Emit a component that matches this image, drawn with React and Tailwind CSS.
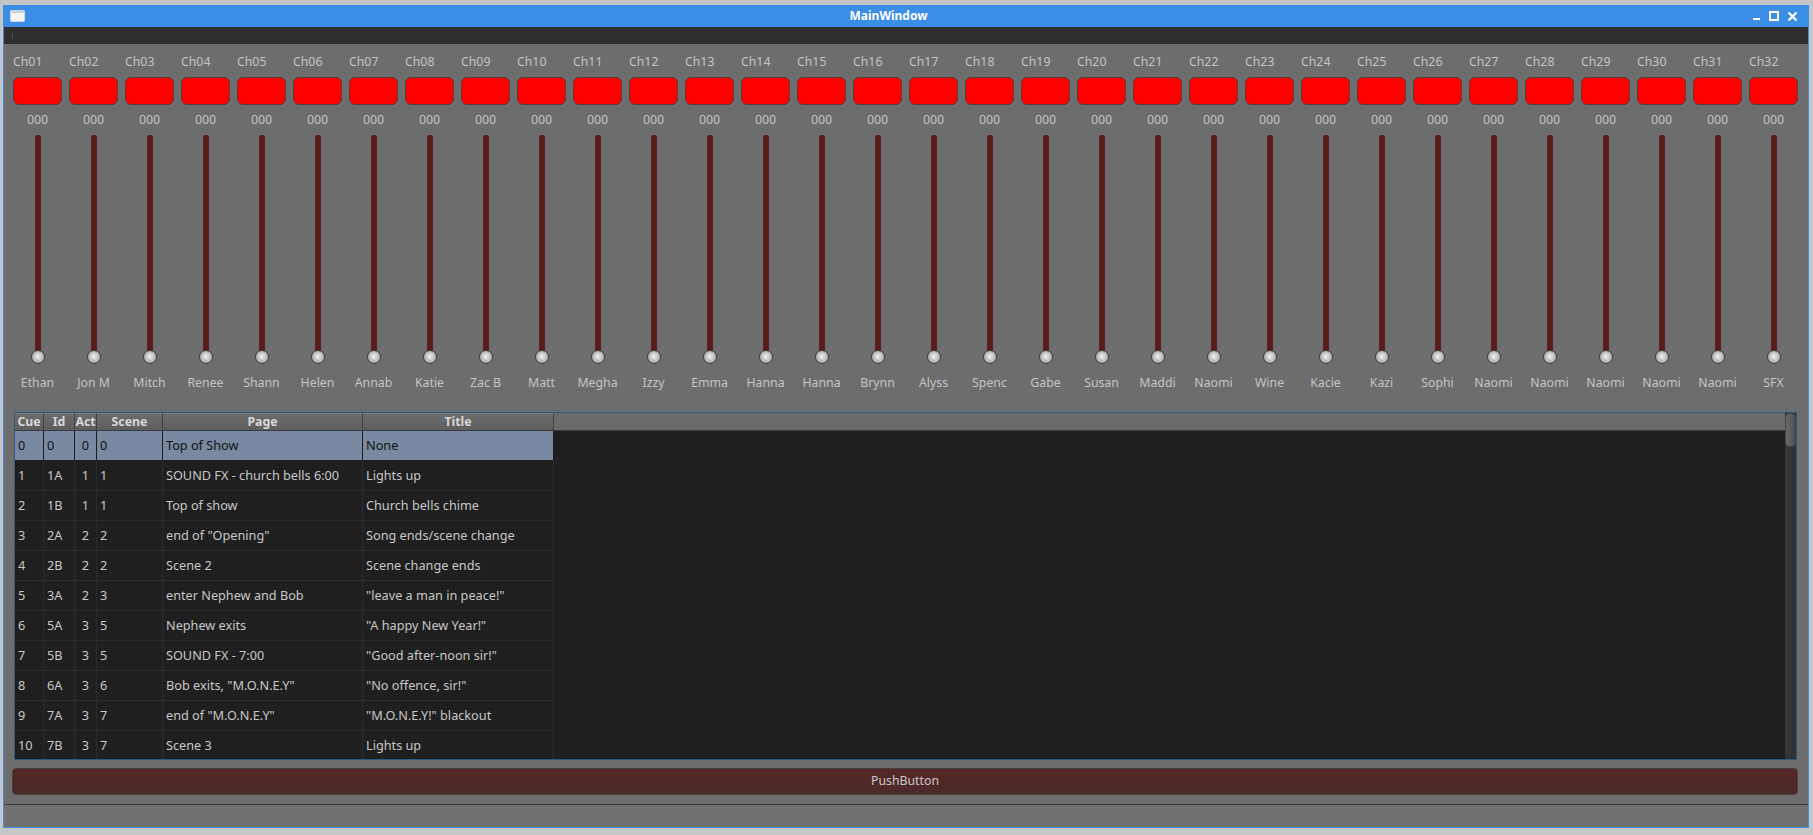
import React from 'react';

const names = [
  'Ethan', 'Jon M', 'Mitch', 'Renee', 'Shann', 'Helen', 'Annab', 'Katie',
  'Zac B', 'Matt', 'Megha', 'Izzy', 'Emma', 'Hanna', 'Hanna', 'Brynn',
  'Alyss', 'Spenc', 'Gabe', 'Susan', 'Maddi', 'Naomi', 'Wine', 'Kacie',
  'Kazi', 'Sophi', 'Naomi', 'Naomi', 'Naomi', 'Naomi', 'Naomi', 'SFX',
];

const cues = [
  ['0', '0', '0', '0', 'Top of Show', 'None'],
  ['1', '1A', '1', '1', 'SOUND FX - church bells 6:00', 'Lights up'],
  ['2', '1B', '1', '1', 'Top of show', 'Church bells chime'],
  ['3', '2A', '2', '2', 'end of "Opening"', 'Song ends/scene change'],
  ['4', '2B', '2', '2', 'Scene 2', 'Scene change ends'],
  ['5', '3A', '2', '3', 'enter Nephew and Bob', '"leave a man in peace!"'],
  ['6', '5A', '3', '5', 'Nephew exits', '"A happy New Year!"'],
  ['7', '5B', '3', '5', 'SOUND FX - 7:00', '"Good after-noon sir!"'],
  ['8', '6A', '3', '6', 'Bob exits, "M.O.N.E.Y"', '"No offence, sir!"'],
  ['9', '7A', '3', '7', 'end of "M.O.N.E.Y"', '"M.O.N.E.Y!" blackout'],
  ['10', '7B', '3', '7', 'Scene 3', 'Lights up'],
];

// column widths: Cue, Id, Act, Scene, Page, Title
const cols = [
  { name: 'Cue', w: 'w-[29px]' },
  { name: 'Id', w: 'w-[31px]' },
  { name: 'Act', w: 'w-[22px]' },
  { name: 'Scene', w: 'w-[66px]' },
  { name: 'Page', w: 'w-[200px]' },
  { name: 'Title', w: 'w-[191px]' },
];

function Channel({ idx, name }) {
  const label = 'Ch' + String(idx + 1).padStart(2, '0');
  return (
    <div className="flex flex-col w-[49px] shrink-0">
      <div className="h-[18px] leading-[18px] text-left">{label}</div>
      <button className="mt-[6px] h-[28px] w-[49px] rounded-[6px] bg-[#ff0000] border border-[#5a3a3a]" />
      <div className="mt-[6px] h-[18px] leading-[18px] text-center">000</div>
      <div className="mt-[6px] h-[229px] flex flex-col items-center">
        <div className="flex-1 w-[6px] rounded-t-[2px] bg-[#5c1b1b]" />
        <div className="-mt-[1px] w-[14px] h-[14px] rounded-full border border-[#3e3e3e] bg-[radial-gradient(circle_at_50%_45%,#f2f2f2_0%,#c4c4c4_45%,#8c8c8c_100%)]" />
      </div>
      <div className="mt-[10px] h-[18px] leading-[18px] text-center whitespace-nowrap">{name}</div>
    </div>
  );
}

export default function App() {
  return (
    <div
      className="w-[1813px] h-[835px] bg-[#c6c6c6] pt-[5px] pl-[3px] overflow-hidden text-[12.3px]"
      style={{ fontFamily: '"Noto Sans", "DejaVu Sans", sans-serif' }}
    >
      <div className="w-[1806px] flex flex-col border-x border-b border-[#3d8ee6] bg-[#6d6d6d]">
        {/* title bar */}
        <div className="h-[22px] bg-[#3b8ee5] flex items-center pl-[6px] pr-[10px]">
          <svg width="15" height="12" viewBox="0 0 15 12">
            <rect x="0.5" y="0.5" width="14" height="11" rx="1" fill="#f4f4f4" stroke="#d0d8e0" />
            <rect x="1" y="1" width="13" height="2" fill="#c7d3de" />
          </svg>
          <div className="flex-1 text-center font-bold text-white text-[12px]">MainWindow</div>
          <div className="flex items-center gap-[8px] text-white">
            <svg width="9" height="10" viewBox="0 0 9 10">
              <rect x="1" y="7" width="7" height="2" fill="#fff" />
            </svg>
            <svg width="10" height="10" viewBox="0 0 10 10">
              <rect x="1" y="1" width="8" height="8" fill="none" stroke="#fff" strokeWidth="2" />
            </svg>
            <svg width="11" height="11" viewBox="0 0 11 11">
              <path d="M1.5 1.5 L9.5 9.5 M9.5 1.5 L1.5 9.5" stroke="#fff" strokeWidth="2.2" />
            </svg>
          </div>
        </div>
        {/* menu bar */}
        <div className="h-[17px] bg-[#2f2f2f] flex items-center pl-[8px]">
          <div className="w-[1px] h-[5px] bg-[#555]" />
        </div>
        {/* central widget */}
        <div className="h-[760px] flex flex-col pb-[9px] text-[#c4c4c4]">
          <div className="flex gap-[7px] pl-[9px] pt-[9px]">
            {names.map((n, i) => (
              <Channel key={i} idx={i} name={n} />
            ))}
          </div>

          {/* cue table */}
          <div className="mt-[20px] ml-[10px] mr-[11px] h-[348px] border border-[#2c5b82] flex bg-[#1f1f1f] overflow-hidden text-[12.7px]">
            <div className="flex-1 flex flex-col overflow-hidden">
              <div className="h-[18px] flex bg-[#6a6a6a] border-b border-[#3a3a3a] text-[12.3px]">
                {cols.map((c) => (
                  <div
                    key={c.name}
                    className={`${c.w} shrink-0 h-full border-r border-[#404040] border-t border-t-[#7a7a7a] bg-gradient-to-b from-[#6c6c6c] to-[#5e5e5e] text-center font-bold text-[#d8d8d8] leading-[16px]`}
                  >
                    {c.name}
                  </div>
                ))}
              </div>
              <div className="flex-1 overflow-hidden">
                {cues.map((r, ri) => (
                  <div
                    key={ri}
                    className={`h-[30px] flex w-fit ${ri === 0 ? 'bg-[#7889a1] text-[#121212]' : 'text-[#c8c8c8]'}`}
                  >
                    {r.map((v, ci) => (
                      <div
                        key={ci}
                        className={`${cols[ci].w} shrink-0 h-full flex items-center border-b border-r ${
                          ri === 0 ? 'border-[#1c1c1c]' : 'border-[#2b2b2b]'
                        } ${ci === 2 ? 'justify-center' : 'pl-[3px]'} whitespace-nowrap overflow-hidden`}
                      >
                        {v}
                      </div>
                    ))}
                  </div>
                ))}
              </div>
            </div>
            {/* scrollbar */}
            <div className="w-[11px] bg-[#2a2a2a] flex flex-col">
              <div className="h-[34px] rounded-[4px] border border-[#444] bg-gradient-to-r from-[#6a6a6a] via-[#5e5e5e] to-[#4e4e4e]" />
              <div className="flex-1 rounded-b-[4px] bg-gradient-to-r from-[#3a3a3a] to-[#2e2e2e]" />
            </div>
          </div>

          <button className="mt-[8px] ml-[8px] mr-[10px] h-[27px] rounded-[4px] border border-[#454040] bg-gradient-to-b from-[#572525] to-[#4b2a2a] text-[#c8c8c8] text-[12.3px]">
            PushButton
          </button>
        </div>
        {/* status bar */}
        <div className="h-[23px] border-t border-[#3a3a3a] bg-[#707070]" />
      </div>
    </div>
  );
}
